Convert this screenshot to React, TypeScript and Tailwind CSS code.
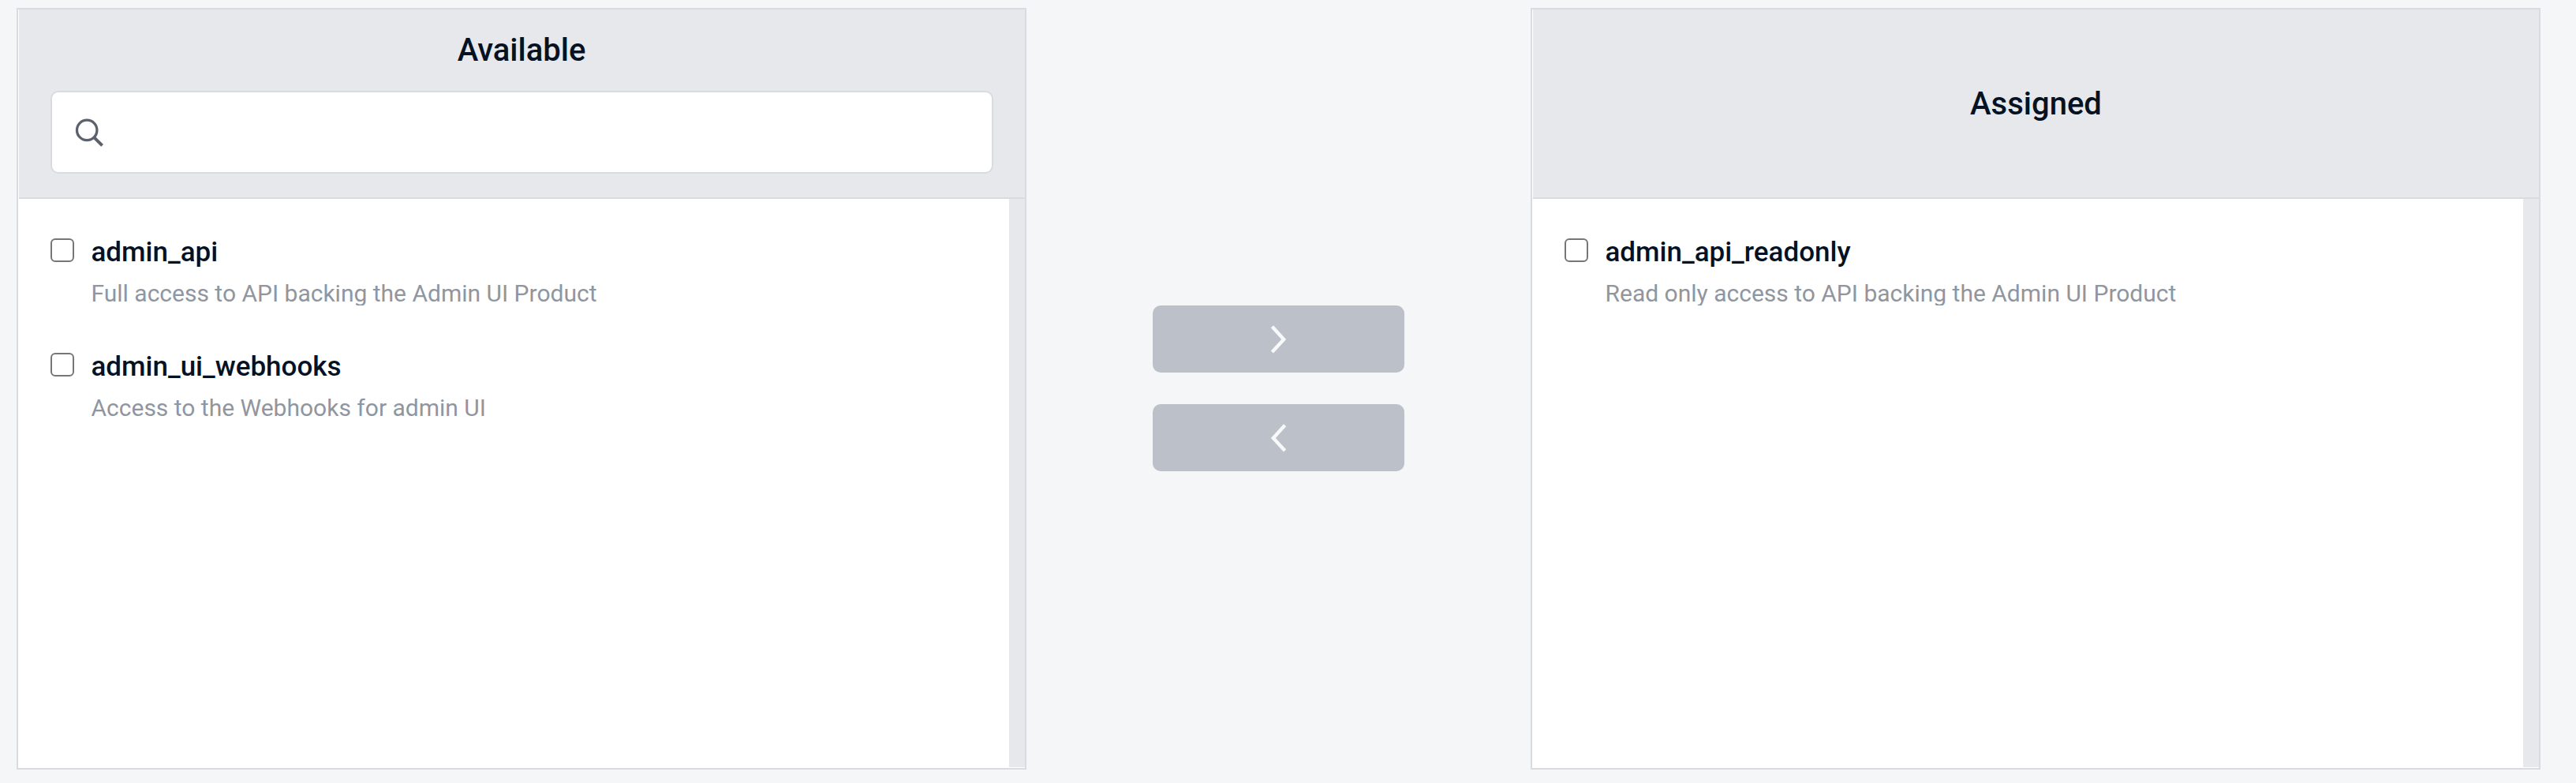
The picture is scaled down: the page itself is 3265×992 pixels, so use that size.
import { ReactNode } from "react";

type Item = { name: string; description: string };

const available: Item[] = [
  { name: "admin_api", description: "Full access to API backing the Admin UI Product" },
  { name: "admin_ui_webhooks", description: "Access to the Webhooks for admin UI" },
];

const assigned: Item[] = [
  { name: "admin_api_readonly", description: "Read only access to API backing the Admin UI Product" },
];

function Row({ name, description }: Item) {
  return (
    <li className="flex h-[145px] items-start">
      <input
        type="checkbox"
        aria-label={name}
        className="mt-[10px] size-[30px] shrink-0 appearance-none rounded-[6px] border-2 border-[#767676] bg-white"
      />
      <div className="ml-[21.5px] flex min-w-0 flex-col pt-[3px]">
        <span className="text-[35px] leading-[50px] font-medium text-[#041224]">{name}</span>
        <span className="mt-[12px] overflow-hidden text-[30px] leading-[30px] text-[#8f969f]">{description}</span>
      </div>
    </li>
  );
}

function Panel({ header, items }: { header: ReactNode; items: Item[] }) {
  return (
    <section className="flex h-[965px] w-[1280px] flex-col border-2 border-[#d8dbdf] bg-white pb-px">
      <header className="ml-px flex h-[240px] shrink-0 flex-col border-b-2 border-[#d8dbdf] bg-[#e7e8ec] px-[40px]">
        {header}
      </header>
      <div className="flex min-h-0 flex-1">
        <ul className="flex-1 pt-[40px] pl-[41px]">
          {items.map((item) => (
            <Row key={item.name} {...item} />
          ))}
        </ul>
        <div className="w-[20px] bg-[#e7e8ec]" />
      </div>
    </section>
  );
}

function MoveButton({ label, points }: { label: string; points: string }) {
  return (
    <button
      type="button"
      aria-label={label}
      className="flex h-[85px] w-[319px] items-center justify-center rounded-[10px] bg-[#bcc0c9]"
    >
      <svg width="21" height="37" viewBox="0 0 21 37" fill="none" stroke="#f8f9fb" strokeWidth="4.4">
        <polyline points={points} />
      </svg>
    </button>
  );
}

export default function App() {
  return (
    <main className="flex h-[992px] w-[3265px] items-start bg-[#f5f6f8] pt-[10px] pl-[21px] font-['Roboto',sans-serif]">
      <Panel
        items={available}
        header={
          <>
            <h2 className="mt-[22px] pr-px text-center text-[40px] leading-[60px] font-medium text-[#041224]">
              Available
            </h2>
            <div className="mt-[21px] flex h-[105px] items-center rounded-[10px] border-2 border-[#d8dbdf] bg-white pl-[28px]">
              <svg width="40" height="40" viewBox="0 0 40 40" fill="none" stroke="#5b626c" strokeWidth="3.3">
                <circle cx="16.2" cy="16.9" r="12.7" />
                <path d="M25 25.8 35.6 36.4" strokeWidth="4" />
              </svg>
              <input type="text" aria-label="Search" className="h-full flex-1 text-[35px] outline-none" />
            </div>
          </>
        }
      />
      <div className="flex w-[639px] flex-col items-center gap-[40px] pt-[377px]">
        <MoveButton label="Move right" points="2.4,2.7 17.2,18.9 2.4,35.1" />
        <MoveButton label="Move left" points="18.6,2.7 3.8,18.9 18.6,35.1" />
      </div>
      <Panel
        items={assigned}
        header={
          <h2 className="my-auto pt-[2px] text-center text-[40px] leading-[60px] font-medium text-[#041224]">
            Assigned
          </h2>
        }
      />
    </main>
  );
}
